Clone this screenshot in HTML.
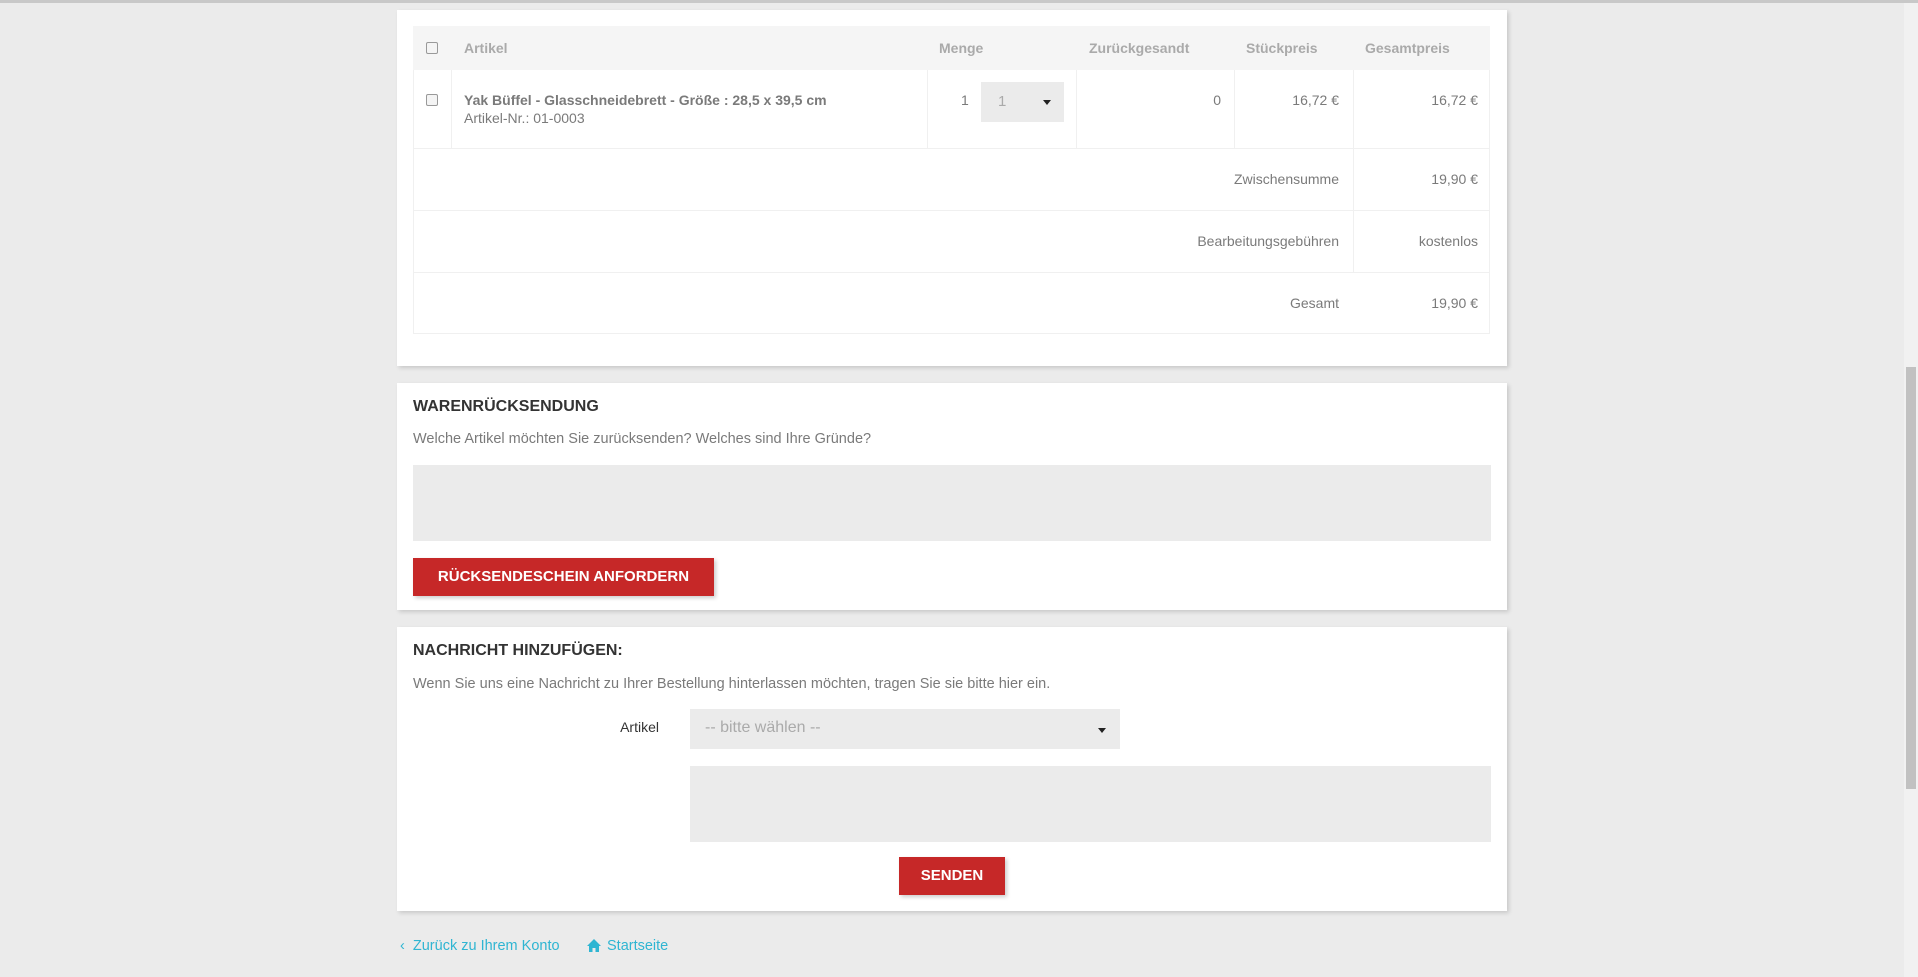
<!DOCTYPE html>
<html><head><meta charset="utf-8"><style>
*{box-sizing:border-box;margin:0;padding:0}
body{width:1918px;height:977px;overflow:hidden;background:#ebebeb;font-family:"Liberation Sans",sans-serif;font-size:14px;color:#7a7a7a;position:relative}
.abs{position:absolute}
.card{position:absolute;left:397px;width:1110px;background:#fff;box-shadow:2px 2px 4px rgba(0,0,0,.15)}
.line{position:absolute;background:#f0f0f0}
.h{font-weight:bold;color:#aaa;font-size:14px}
.r{text-align:right}
.title{position:absolute;left:16px;font-weight:bold;color:#333;font-size:16px}
.desc{position:absolute;left:16px;color:#7a7a7a;font-size:14.5px}
.ta{position:absolute;background:#ebebeb}
.btn{position:absolute;background:#c62828;color:#fff;font-weight:bold;font-size:15px;text-align:center;box-shadow:2px 2px 4px rgba(0,0,0,.2)}
.cb{position:absolute;width:12px;height:12px;border:1px solid #999;border-radius:2px;background:#f4f4f4}
.link{color:#2fb5d2;font-size:14.5px}
</style></head><body>
<div class="abs" style="left:0;top:0;width:1918px;height:3px;background:#c8c8c8"></div>
<div class="card" style="top:10px;height:356px">
 <div class="abs" style="left:16px;top:16px;width:1077px;height:308px;border:1px solid #f0f0f0"></div>
 <div class="abs" style="left:16px;top:16px;width:1077px;height:44px;background:#f5f5f5"></div>
 <div class="line" style="left:16px;top:138px;width:1077px;height:1px"></div>
 <div class="line" style="left:16px;top:200px;width:1077px;height:1px"></div>
 <div class="line" style="left:16px;top:262px;width:1077px;height:1px"></div>
 <div class="line" style="left:54px;top:60px;width:1px;height:78px"></div>
 <div class="line" style="left:530px;top:60px;width:1px;height:78px"></div>
 <div class="line" style="left:679px;top:60px;width:1px;height:78px"></div>
 <div class="line" style="left:837px;top:60px;width:1px;height:78px"></div>
 <div class="line" style="left:956px;top:60px;width:1px;height:202px"></div>
 <div class="cb" style="left:29px;top:32px"></div>
 <div class="abs h" style="left:67px;top:30px">Artikel</div>
 <div class="abs h" style="left:542px;top:30px">Menge</div>
 <div class="abs h" style="left:692px;top:30px">Zurückgesandt</div>
 <div class="abs h" style="left:849px;top:30px">Stückpreis</div>
 <div class="abs h" style="left:968px;top:30px">Gesamtpreis</div>
 <div class="cb" style="left:29px;top:84px"></div>
 <div class="abs" style="left:67px;top:82px;font-weight:bold;color:#7a7a7a">Yak Büffel - Glasschneidebrett - Größe : 28,5 x 39,5 cm</div>
 <div class="abs" style="left:67px;top:100px">Artikel-Nr.: 01-0003</div>
 <div class="abs" style="left:564px;top:82px">1</div>
 <div class="abs" style="left:584px;top:72px;width:83px;height:40px;background:#ebebeb"></div>
 <div class="abs" style="left:601px;top:83px;color:#aaa;font-size:15px">1</div>
 <div class="abs" style="left:646px;top:90px;border-left:4px solid transparent;border-right:4px solid transparent;border-top:5px solid #222"></div>
 <div class="abs r" style="left:780px;width:44px;top:82px">0</div>
 <div class="abs r" style="left:880px;width:62px;top:82px">16,72 €</div>
 <div class="abs r" style="left:1000px;width:81px;top:82px">16,72 €</div>
 <div class="abs r" style="left:700px;width:242px;top:161px">Zwischensumme</div>
 <div class="abs r" style="left:1000px;width:81px;top:161px">19,90 €</div>
 <div class="abs r" style="left:700px;width:242px;top:223px">Bearbeitungsgebühren</div>
 <div class="abs r" style="left:1000px;width:81px;top:223px">kostenlos</div>
 <div class="abs r" style="left:700px;width:242px;top:285px">Gesamt</div>
 <div class="abs r" style="left:1000px;width:81px;top:285px">19,90 €</div>
</div>
<div class="card" style="top:383px;height:227px">
 <div class="title" style="top:15px">WARENRÜCKSENDUNG</div>
 <div class="desc" style="top:48px">Welche Artikel möchten Sie zurücksenden? Welches sind Ihre Gründe?</div>
 <div class="ta" style="left:16px;top:82px;width:1078px;height:76px"></div>
 <div class="btn" style="left:16px;top:175px;width:301px;height:38px;line-height:38px">RÜCKSENDESCHEIN ANFORDERN</div>
</div>
<div class="card" style="top:627px;height:284px">
 <div class="title" style="top:15px">NACHRICHT HINZUFÜGEN:</div>
 <div class="desc" style="top:49px">Wenn Sie uns eine Nachricht zu Ihrer Bestellung hinterlassen möchten, tragen Sie sie bitte hier ein.</div>
 <div class="abs r" style="left:150px;width:112px;top:92px;color:#333">Artikel</div>
 <div class="ta" style="left:293px;top:82px;width:430px;height:40px"></div>
 <div class="abs" style="left:308px;top:92px;color:#aaa;font-size:16px">-- bitte wählen --</div>
 <div class="abs" style="left:701px;top:101px;border-left:4px solid transparent;border-right:4px solid transparent;border-top:5px solid #222"></div>
 <div class="ta" style="left:293px;top:139px;width:801px;height:76px"></div>
 <div class="btn" style="left:502px;top:230px;width:106px;height:38px;line-height:38px">SENDEN</div>
</div>
<div class="abs link" style="left:400px;top:938px">‹&nbsp; Zurück zu Ihrem Konto</div>
<svg class="abs" style="left:587px;top:939px" width="14" height="13" viewBox="0 0 14 13"><path d="M7 0 L14 7 H12 V13 H8.5 V9 H5.5 V13 H2 V7 H0 Z" fill="#2fb5d2"/></svg>
<div class="abs link" style="left:607px;top:938px">Startseite</div>
<div class="abs" style="left:1904px;top:3px;width:14px;height:974px;background:#f1f1f1"></div>
<div class="abs" style="left:1906px;top:367px;width:10px;height:422px;background:#c1c1c1"></div>
</body></html>
